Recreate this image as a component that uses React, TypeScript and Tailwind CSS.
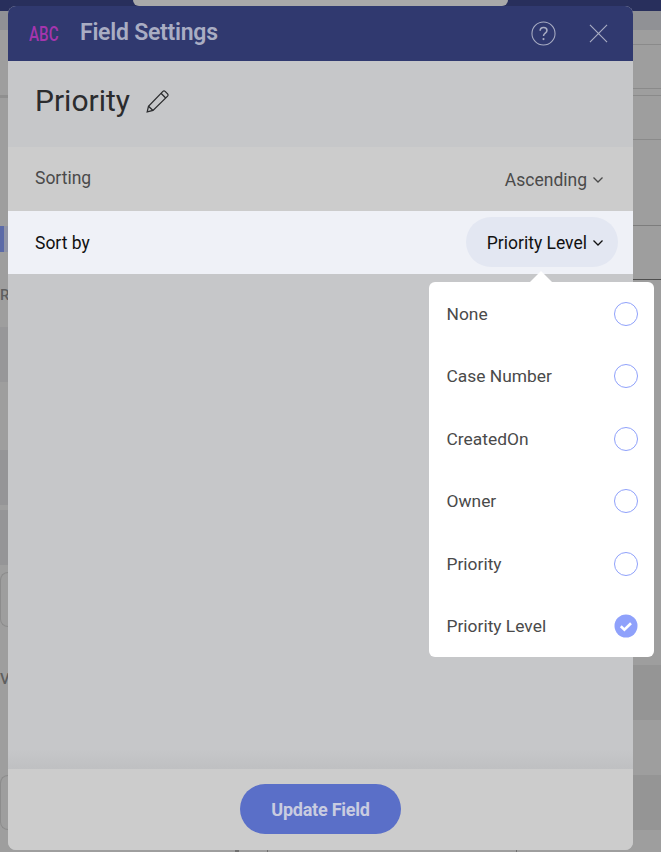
// App.tsx
import React from "react";

const options = ["None", "Case Number", "CreatedOn", "Owner", "Priority", "Priority Level"];

function Chevron({ className = "" }: { className?: string }) {
  return (
    <svg width="12" height="8" viewBox="0 0 12 8" fill="none" className={className}>
      <path d="M1.5 1.5 6 6l4.5-4.5" stroke="currentColor" strokeWidth="1.3" />
    </svg>
  );
}

function Radio({ checked }: { checked: boolean }) {
  if (checked) {
    return (
      <svg width="24" height="24" viewBox="0 0 24 24">
        <circle cx="12" cy="12" r="11.5" fill="#8fa1fb" />
        <path d="M6.8 12.2l3.6 3.4 6.6-6.4" fill="none" stroke="#fff" strokeWidth="2.6" />
      </svg>
    );
  }
  return <div className="h-6 w-6 rounded-full border border-[#8fa1fb]" />;
}

// dimmed page that sits behind the modal
function Backdrop() {
  return (
    <div className="absolute inset-0 flex flex-col bg-[#9e9e9e]">
      <div className="flex h-[11px] shrink-0 bg-[#282f5c] pl-[133px]">
        <div className="h-[6px] w-[375px] rounded-b-lg bg-[#a9a9a9]" />
      </div>
      <div className="h-[19px] shrink-0 bg-[#909195]" />

      <div className="flex flex-1 justify-between">
        {/* left edge */}
        <div className="flex w-2 flex-col overflow-hidden text-[15px] font-medium leading-none text-[#5f5f5f]">
          <div className="h-[68px] border-b-[3px] border-[#8f8f8f]" />
          <div className="h-[128px]" />
          <div className="flex h-[26px] bg-[#5b6aa8] pl-1">
            <div className="flex-1 bg-[#8f93a6]" />
          </div>
          <div className="h-[36px] shrink-0" />
          <div className="h-[39px] shrink-0">R</div>
          <div className="h-[55px] shrink-0 bg-[#979799]" />
          <div className="h-[68px] shrink-0" />
          <div className="h-[55px] shrink-0 bg-[#959597]" />
          <div className="h-[5px] shrink-0" />
          <div className="h-[55px] shrink-0 bg-[#959597]" />
          <div className="h-[7px] shrink-0" />
          <div className="h-[55px] shrink-0 rounded-l-lg border border-r-0 border-[#8c8c8c]" />
          <div className="h-[45px] shrink-0" />
          <div className="h-[103px] shrink-0">V</div>
          <div className="h-[55px] shrink-0 rounded-l-lg border border-r-0 border-[#8c8c8c]" />
        </div>

        {/* bottom ticks under the modal */}
        <div className="flex flex-1 items-end pl-[227px]">
          <div className="h-[3px] w-1 bg-[#6f6f6f]" />
          <div className="ml-7 h-[3px] w-px bg-[#6f6f6f]" />
          <div className="ml-[248px] h-[3px] w-px bg-[#6f6f6f]" />
        </div>

        {/* right edge */}
        <div className="flex w-7 flex-col">
          <div className="h-[15px] shrink-0 border-b border-[#8a8a8a]" />
          <div className="h-[44px] shrink-0 border-b border-[#8a8a8a]" />
          <div className="h-[7px] shrink-0 border-b border-[#8a8a8a]" />
          <div className="h-[44px] shrink-0 border-b border-[#8a8a8a]" />
          <div className="h-[86px] shrink-0 border-b border-[#7d7d7d]" />
          <div className="h-[54px] shrink-0 border-b border-[#4f4f4f]" />
          <div className="h-[385px] shrink-0" />
          <div className="h-[55px] shrink-0 bg-[#959595]" />
          <div className="h-[55px] shrink-0" />
          <div className="h-[55px] shrink-0 bg-[#959595]" />
        </div>
      </div>
    </div>
  );
}

export default function App() {
  return (
    <div className="relative h-[852px] w-[661px] overflow-hidden pl-2 pt-[6px] font-['Roboto',sans-serif]">
      <Backdrop />

      <div className="relative flex h-[844px] w-[625px] flex-col overflow-hidden rounded-lg bg-[#c6c7c9]">
        <div className="flex h-[55px] items-center bg-[#30396f] pl-[21px] pr-[25px]">
          <span className="inline-block w-[29px] origin-left scale-x-[0.76] whitespace-nowrap text-[20px] font-medium text-[#a535ae]">ABC</span>
          <span className="ml-[22px] text-[23px] font-semibold tracking-[-0.25px] text-[#a9adc3]">Field Settings</span>
          <div className="ml-auto flex items-center gap-[33px] text-[#a9adc3]">
            <svg width="25" height="25" viewBox="0 0 26 26" fill="none">
              <circle cx="13" cy="13" r="12" stroke="currentColor" strokeWidth="1.1" />
              <path d="M9.5 10.2c0-2 1.5-3.4 3.6-3.4s3.5 1.3 3.5 3.1c0 2.8-3.6 2.7-3.6 5.6" stroke="currentColor" strokeWidth="1.6" />
              <circle cx="13" cy="18.8" r="1.1" fill="currentColor" />
            </svg>
            <svg width="19" height="19" viewBox="0 0 20 20" fill="none">
              <path d="M1 1l18 18M19 1 1 19" stroke="currentColor" strokeWidth="1.2" />
            </svg>
          </div>
        </div>

        <div className="flex h-[86px] items-center pb-[6px] pl-[27px]">
          <span className="text-[30px] leading-none text-[#2b2c2e]">Priority</span>
          <svg width="26" height="26" viewBox="0 0 26 26" fill="none" className="ml-[15px]" stroke="#2b2c2e" strokeWidth="1.3">
            <path d="M2.2 23.8l1.3-5.6L17.9 3.4a1.6 1.6 0 0 1 2.2 0l2.5 2.5a1.6 1.6 0 0 1 0 2.2L8 22.5z" />
            <path d="M16 5.3l4.7 4.7M3.5 18.2 8 22.5" />
          </svg>
        </div>

        <div className="flex h-[64px] items-center justify-between bg-[#cccccc] pl-[27px] pr-[29px] text-[17.5px] text-[#4a4a4a]">
          <span className="pb-[2px]">Sorting</span>
          <span className="flex items-center gap-[5px] pt-[2px]">
            Ascending
            <Chevron />
          </span>
        </div>

        <div className="flex h-[63px] items-center justify-between bg-[#eff1f7] pl-[27px] pr-[15px] text-[17.5px] text-[#111]">
          <span className="pt-[2px]">Sort by</span>
          <span className="-mt-[1px] flex h-[50px] w-[152px] items-center justify-end gap-[5px] rounded-full bg-[#e3e7f2] pr-[14px] pt-[2px]">
            Priority Level
            <Chevron />
          </span>
        </div>

        <div className="flex-1 bg-gradient-to-b from-[#c6c7c9] from-96% to-[#bfc0c2]" />

        <div className="flex h-[81px] justify-center bg-[#cccccc] pt-[15px]">
          <button className="h-[50px] w-[161px] rounded-full bg-[#5a6fc8] pt-[1px] text-[18px] font-bold tracking-[-0.25px] text-[#c9cce0]">
            Update Field
          </button>
        </div>
      </div>

      {/* sort by dropdown */}
      <div className="absolute left-[429px] top-[282px] h-[375px] w-[225px] rounded-md bg-white pl-[17.5px] pr-[16px] pt-[0.3px]">
        <div className="absolute -top-[11px] left-[101px] h-0 w-0 border-x-[11px] border-b-[11px] border-x-transparent border-b-white" />
        {options.map((o) => (
          <div key={o} className="flex h-[62.5px] items-center justify-between text-[17.4px] text-[#4a4a4a]">
            <span className="pt-[0.2px]">{o}</span>
            <Radio checked={o === "Priority Level"} />
          </div>
        ))}
      </div>
    </div>
  );
}
